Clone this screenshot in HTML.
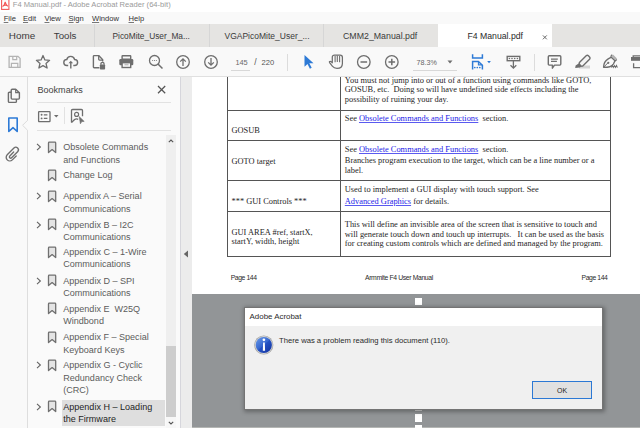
<!DOCTYPE html>
<html><head><meta charset="utf-8"><style>
html,body{margin:0;padding:0;width:640px;height:428px;overflow:hidden;background:#fff;}
.r{position:absolute;display:block;}
.t{position:absolute;white-space:nowrap;}
u.lk{color:#2323e8;text-decoration:underline;text-decoration-thickness:0.6px;text-underline-offset:1px;text-decoration-color:#5a5af0;}
u.m{text-decoration:underline;text-decoration-thickness:0.6px;text-underline-offset:0.8px;text-decoration-color:#777;}
svg.r{overflow:visible;}
</style></head><body>
<div class="r" style="left:0px;top:0px;width:640px;height:12px;background:#ffffff;"></div>
<div class="r" style="left:0px;top:12px;width:640px;height:12px;background:#f9f9f9;"></div>
<div class="r" style="left:0px;top:24px;width:640px;height:23px;background:#e5e4e2;"></div>
<div class="r" style="left:438px;top:24px;width:114px;height:23px;background:#ffffff;"></div>
<div class="r" style="left:94px;top:24px;width:1px;height:23px;background:#d6d6d6;"></div>
<div class="r" style="left:209px;top:24px;width:1px;height:23px;background:#d6d6d6;"></div>
<div class="r" style="left:323px;top:24px;width:1px;height:23px;background:#d6d6d6;"></div>
<div class="r" style="left:0px;top:47px;width:640px;height:29px;background:#f9f9f9;"></div>
<div class="r" style="left:0px;top:76px;width:640px;height:1px;background:#e0e0e0;"></div>
<div class="r" style="left:0px;top:77px;width:27px;height:351px;background:#f9f9f9;"></div>
<div class="r" style="left:27px;top:77px;width:1px;height:351px;background:#dedede;"></div>
<div class="r" style="left:28px;top:77px;width:152px;height:351px;background:#fafafa;"></div>
<div class="r" style="left:180px;top:77px;width:12px;height:351px;background:#ececec;"></div>
<div class="r" style="left:180px;top:77px;width:1px;height:351px;background:#d6d6dc;"></div>
<div class="r" style="left:192px;top:77px;width:448px;height:217px;background:#ffffff;"></div>
<div class="r" style="left:192px;top:294px;width:448px;height:134px;background:#929597;"></div>
<svg class="r" style="left:1px;top:0px;" width="9" height="11" viewBox="0 0 9 11"><rect x="0.6" y="-0.5" width="7.3" height="9.9" fill="#fff" stroke="#f25a5a" stroke-width="1.1"/><path d="M4.2 1.8c-0.5 2.2-1.5 4-2.6 5M4.2 1.8c0.5 2.2 1.5 3.8 2.7 4.6M1.8 5.8c1.6-0.8 3.4-0.8 5 0" fill="none" stroke="#f25a5a" stroke-width="1.1"/></svg>
<div class="t" style="left:12.8px;top:0.72px;font-size:7.6px;line-height:8.489px;color:#9a9a9a;font-family:'Liberation Sans', sans-serif;">F4 Manual.pdf - Adobe Acrobat Reader (64-bit)</div>
<div class="t" style="left:3.7px;top:14.72px;font-size:7.6px;line-height:8.489px;color:#333;font-family:'Liberation Sans', sans-serif;"><u class="m">F</u>ile</div>
<div class="t" style="left:23px;top:14.72px;font-size:7.6px;line-height:8.489px;color:#333;font-family:'Liberation Sans', sans-serif;"><u class="m">E</u>dit</div>
<div class="t" style="left:44.5px;top:14.72px;font-size:7.6px;line-height:8.489px;color:#333;font-family:'Liberation Sans', sans-serif;"><u class="m">V</u>iew</div>
<div class="t" style="left:68.5px;top:14.72px;font-size:7.6px;line-height:8.489px;color:#333;font-family:'Liberation Sans', sans-serif;"><u class="m">S</u>ign</div>
<div class="t" style="left:92px;top:14.72px;font-size:7.6px;line-height:8.489px;color:#333;font-family:'Liberation Sans', sans-serif;"><u class="m">W</u>indow</div>
<div class="t" style="left:128.5px;top:14.72px;font-size:7.6px;line-height:8.489px;color:#333;font-family:'Liberation Sans', sans-serif;"><u class="m">H</u>elp</div>
<div class="t" style="left:8.8px;top:30.24px;font-size:9.9px;line-height:11.058px;color:#3a3a3a;font-family:'Liberation Sans', sans-serif;">Home</div>
<div class="t" style="left:53.8px;top:30.92px;font-size:9.7px;line-height:10.835px;color:#3a3a3a;font-family:'Liberation Sans', sans-serif;">Tools</div>
<div class="t" style="left:112.5px;top:32.44px;font-size:8.35px;line-height:9.327px;color:#3a3a3a;font-family:'Liberation Sans', sans-serif;">PicoMite_User_Ma...</div>
<div class="t" style="left:224.5px;top:32.31px;font-size:8.5px;line-height:9.495px;color:#3a3a3a;font-family:'Liberation Sans', sans-serif;">VGAPicoMite_User_...</div>
<div class="t" style="left:343px;top:32.04px;font-size:8.8px;line-height:9.830px;color:#3a3a3a;font-family:'Liberation Sans', sans-serif;">CMM2_Manual.pdf</div>
<div class="t" style="left:467.5px;top:32.43px;font-size:8.7px;line-height:9.718px;color:#2a2a2a;font-family:'Liberation Sans', sans-serif;">F4 Manual.pdf</div>
<svg class="r" style="left:541px;top:33px;" width="8" height="8" viewBox="0 0 8 8"><path d="M1.9 2.4l3.9 3.9M5.8 2.4l-3.9 3.9" stroke="#6a6a6a" stroke-width="1"/></svg>
<svg class="r" style="left:7px;top:55px;" width="16" height="15" viewBox="0 0 16 15"><path d="M2.1 1.3H11L13.1 3.4V12.4H2.1Z" stroke="#b4b4b4" stroke-width="1.3" fill="none"/><path d="M5.8 1.3V4.7H9.7V1.3M4.4 12.4V8.3H10.8V12.4" stroke="#b4b4b4" stroke-width="1.2" fill="none"/></svg>
<svg class="r" style="left:35px;top:54px;" width="16" height="16" viewBox="0 0 16 16"><path d="M8 1.5l1.9 4.4 4.7.4-3.6 3.1 1.1 4.6L8 11.6l-4.1 2.4 1.1-4.6-3.6-3.1 4.7-.4z" stroke="#6e6e6e" stroke-width="1.3" fill="none" stroke-linejoin="round"/></svg>
<svg class="r" style="left:60px;top:52px;" width="22" height="20" viewBox="0 0 22 20"><path d="M8.2 13.5H6.8A3 3 0 0 1 6.8 7.5A4 4 0 0 1 14.6 7.5A3 3 0 0 1 14.6 13.5H13.3" stroke="#6e6e6e" stroke-width="1.4" fill="none"/><path d="M10.8 16.6V10.6" stroke="#6e6e6e" stroke-width="1.4"/><path d="M8.5 11.3L10.8 8.7L13.1 11.3Z" fill="#6e6e6e"/></svg>
<svg class="r" style="left:88px;top:52px;" width="22" height="20" viewBox="0 0 22 20"><path d="M11.4 15.7H6.1Q5.4 15.7 5.4 15V4.3Q5.4 3.6 6.1 3.6H10.7L14.7 7.8V9.6" stroke="#6e6e6e" stroke-width="1.4" fill="none" stroke-linejoin="round"/><path d="M10.7 3.8V7.3Q10.7 8.1 11.5 8.1H14.5" stroke="#6e6e6e" stroke-width="1.3" fill="none"/><rect x="11.9" y="12.5" width="5.2" height="5" rx="0.8" fill="#6e6e6e"/><path d="M12.9 12.8V11.9A1.6 1.6 0 0 1 16.1 11.9V12.8" stroke="#6e6e6e" stroke-width="1.3" fill="none"/></svg>
<svg class="r" style="left:118px;top:54px;" width="17" height="15" viewBox="0 0 17 15"><rect x="4.1" y="1.8" width="8.6" height="3.4" rx="0.5" stroke="#6e6e6e" stroke-width="1.4" fill="none"/><rect x="1.3" y="5" width="14" height="6.3" rx="1.3" fill="#6e6e6e"/><rect x="4.1" y="8.7" width="8.6" height="4.8" fill="#f9f9f9" stroke="#6e6e6e" stroke-width="1.4"/><path d="M6.5 10.8h4" stroke="#aaa" stroke-width="1"/></svg>
<svg class="r" style="left:148px;top:54px;" width="16" height="16" viewBox="0 0 16 16"><circle cx="6.5" cy="6.5" r="5" stroke="#6e6e6e" stroke-width="1.3" fill="none"/><path d="M10 10l4.5 4.5" stroke="#6e6e6e" stroke-width="1.5"/><path d="M4.3 6.5h0.8M6.1 6.5h0.8M7.9 6.5h0.8" stroke="#6e6e6e" stroke-width="1.2"/></svg>
<svg class="r" style="left:175px;top:55px;" width="16" height="15" viewBox="0 0 16 15"><circle cx="8" cy="7" r="6.3" stroke="#6e6e6e" stroke-width="1.3" fill="none"/><path d="M8 11v-7M5.2 6.6L8 3.8l2.8 2.8" stroke="#6e6e6e" stroke-width="1.3" fill="none"/></svg>
<svg class="r" style="left:203px;top:55px;" width="16" height="15" viewBox="0 0 16 15"><circle cx="8" cy="7" r="6.3" stroke="#6e6e6e" stroke-width="1.3" fill="none"/><path d="M8 3v7M5.2 7.4L8 10.2l2.8-2.8" stroke="#6e6e6e" stroke-width="1.3" fill="none"/></svg>
<div class="t" style="left:235.4px;top:58.60px;font-size:7.4px;line-height:8.266px;color:#6a6a6a;font-family:'Liberation Sans', sans-serif;">145</div>
<div class="r" style="left:231px;top:70px;width:19px;height:1px;background:#d8d8d8;"></div>
<div class="t" style="left:254.2px;top:58.02px;font-size:8.6px;line-height:9.606px;color:#555;font-family:'Liberation Sans', sans-serif;">/</div>
<div class="t" style="left:261.6px;top:58.92px;font-size:7.6px;line-height:8.489px;color:#555;font-family:'Liberation Sans', sans-serif;">220</div>
<div class="r" style="left:287px;top:53.5px;width:1px;height:17px;background:#dcdcdc;"></div>
<svg class="r" style="left:303px;top:54px;" width="11" height="15" viewBox="0 0 11 15"><path d="M1.5 1l9 8.2h-4.2l2.4 4.6-1.8.9-2.4-4.6-3 2.6z" fill="#2d7ad6"/></svg>
<svg class="r" style="left:326px;top:52px;" width="20" height="20" viewBox="0 0 20 20"><path d="M6.3 10.8V5Q6.3 3.2 8.5 3.2H14.2Q16.4 3.2 16.4 5.4V11.5Q16.4 16.4 11 16.4Q8 16.4 6.3 14.2L3.6 10.6Q3 9.3 4.3 9.3Q5.3 9.3 6.3 10.8Z" stroke="#6e6e6e" stroke-width="1.25" fill="none" stroke-linejoin="round"/><path d="M9.1 4v6.2M11.3 3.6v6.4M13.6 4v6.2" stroke="#6e6e6e" stroke-width="1.1"/></svg>
<svg class="r" style="left:356px;top:55px;" width="16" height="15" viewBox="0 0 16 15"><circle cx="7.8" cy="7" r="6.3" stroke="#6e6e6e" stroke-width="1.3" fill="none"/><path d="M4.5 7h6.6" stroke="#6e6e6e" stroke-width="1.5"/></svg>
<svg class="r" style="left:384px;top:55px;" width="16" height="15" viewBox="0 0 16 15"><circle cx="7.8" cy="7" r="6.3" stroke="#6e6e6e" stroke-width="1.3" fill="none"/><path d="M4.5 7h6.6M7.8 3.7v6.6" stroke="#6e6e6e" stroke-width="1.5"/></svg>
<div class="t" style="left:416.6px;top:58.78px;font-size:7.2px;line-height:8.042px;color:#666;font-family:'Liberation Sans', sans-serif;">78.3%</div>
<div class="r" style="left:413px;top:70px;width:44px;height:1px;background:#d8d8d8;"></div>
<svg class="r" style="left:447px;top:60px;" width="6" height="4" viewBox="0 0 6 4"><path d="M0.5 0.5h5l-2.5 3z" fill="#6e6e6e"/></svg>
<svg class="r" style="left:466px;top:52px;" width="30" height="20" viewBox="0 0 30 20"><path d="M6.6 2.3V6.1H16.4V2.3" stroke="#2d7ad6" stroke-width="1.5" fill="none"/><path d="M6.6 17.6V9.4H12.4L16.4 13.2V17.6" stroke="#2d7ad6" stroke-width="1.5" fill="none"/><path d="M12.4 9.4V12.9H16.2" stroke="#2d7ad6" stroke-width="1.1" fill="none"/><circle cx="8.8" cy="15.5" r="0.85" fill="#2d7ad6"/><circle cx="11.3" cy="15.5" r="0.85" fill="#2d7ad6"/><circle cx="13.8" cy="15.5" r="0.85" fill="#2d7ad6"/></svg>
<svg class="r" style="left:466px;top:52px;" width="30" height="20" viewBox="0 0 30 20"><path d="M21.2 9h3.7l-1.85 2.3z" fill="#2d7ad6"/></svg>
<svg class="r" style="left:500px;top:52px;" width="30" height="20" viewBox="0 0 30 20"><rect x="7.2" y="4.4" width="12.6" height="4.3" stroke="#6e6e6e" stroke-width="1.4" fill="none"/><circle cx="9.4" cy="6.5" r="0.8" fill="#6e6e6e"/><circle cx="12" cy="6.5" r="0.8" fill="#6e6e6e"/><circle cx="14.7" cy="6.5" r="0.8" fill="#6e6e6e"/><circle cx="17.4" cy="6.5" r="0.8" fill="#6e6e6e"/><path d="M13.4 8.7V15.8M10.5 13.2l2.9 2.9 2.9-2.9" stroke="#6e6e6e" stroke-width="1.3" fill="none"/></svg>
<div class="r" style="left:534px;top:53.5px;width:1px;height:17px;background:#dcdcdc;"></div>
<svg class="r" style="left:544px;top:52px;" width="22" height="20" viewBox="0 0 22 20"><path d="M5.3 3.7H15.8Q16.8 3.7 16.8 4.7V12.1Q16.8 13.1 15.8 13.1H10.5L8.4 16.2V13.1H5.3Q4.3 13.1 4.3 12.1V4.7Q4.3 3.7 5.3 3.7Z" stroke="#6e6e6e" stroke-width="1.4" fill="none" stroke-linejoin="round"/><path d="M7 7.2H13.8M7 9.3H12.9" stroke="#6e6e6e" stroke-width="1.2"/></svg>
<svg class="r" style="left:572px;top:52px;" width="24" height="20" viewBox="0 0 24 20"><rect x="7" y="13.5" width="11" height="3" fill="#d4d4d4"/><g transform="translate(12.6,8.8) rotate(-45)"><rect x="-6.2" y="-2.4" width="12.4" height="4.8" rx="1.6" stroke="#6e6e6e" stroke-width="1.4" fill="#f4f4f4"/></g><path d="M6.6 11.6l2.8 2.8-1.6 1.2-4.6 0.4 0.4-2.6z" fill="#6e6e6e"/></svg>
<svg class="r" style="left:600px;top:52px;" width="24" height="20" viewBox="0 0 24 20"><path d="M3.6 15.2c0-3.8 1.6-6.6 4.6-8.4l3.2-1.6 3.6 3.6-1.6 3.2c-1.8 3-4.8 3.2-9.8 3.2z" stroke="#6e6e6e" stroke-width="1.4" fill="none" stroke-linejoin="round"/><path d="M3.8 15l4.2-4.2" stroke="#6e6e6e" stroke-width="1"/><circle cx="8.3" cy="10.8" r="1.1" fill="#6e6e6e"/><path d="M10.6 4.6l1.6-1.8M15 9l1.8-1.6" stroke="#6e6e6e" stroke-width="1.3"/><path d="M12.2 3.2l4 4" stroke="#b0b0b0" stroke-width="2"/><path d="M11.2 15.6l1.1-2.1 1 1.9 1.1-1.9 1 1.9 1.1-1.9 0.9 2.1" stroke="#6e6e6e" stroke-width="1.05" fill="none"/></svg>
<svg class="r" style="left:620px;top:50px;" width="20" height="24" viewBox="0 0 20 24"><rect x="11" y="7" width="10" height="3.8" fill="#6e6e6e"/><path d="M13.2 7v-1.2h8" stroke="#6e6e6e" stroke-width="1.3" fill="none"/><path d="M13.6 13.2v4.4h7" stroke="#6e6e6e" stroke-width="1.3" fill="none"/></svg>
<svg class="r" style="left:4px;top:86px;" width="20" height="20" viewBox="0 0 20 20"><path d="M8.2 3.3H11.7L15.4 6.8V12.1Q15.4 13.1 14.4 13.1H8.2Q7.2 13.1 7.2 12.1V4.3Q7.2 3.3 8.2 3.3Z" stroke="#6e6e6e" stroke-width="1.4" fill="none" stroke-linejoin="round"/><path d="M11.7 3.3V6.6H15.4" stroke="#6e6e6e" stroke-width="1.2" fill="none"/><path d="M7.2 6.3H5.4Q4.4 6.3 4.4 7.3V15.4Q4.4 16.4 5.4 16.4H11.4Q12.4 16.4 12.4 15.4V13.1" stroke="#6e6e6e" stroke-width="1.4" fill="none"/></svg>
<svg class="r" style="left:7px;top:117px;" width="12" height="16" viewBox="0 0 12 16"><path d="M1.8 1v13.5l4.2-3.8 4.2 3.8V1z" stroke="#2d7ad6" stroke-width="1.6" fill="none" stroke-linejoin="round"/></svg>
<svg class="r" style="left:22px;top:120px;" width="7" height="11" viewBox="0 0 7 11"><path d="M5.5 0.4L0.6 5.3 5.5 10.2H6.2V0.4Z" fill="#fafafa"/><path d="M5.5 0.4L0.6 5.3 5.5 10.2" stroke="#dcdcdc" stroke-width="1" fill="none"/></svg>
<svg class="r" style="left:2px;top:144px;" width="22" height="22" viewBox="0 0 22 22"><g transform="translate(10.6,10.5) rotate(45)"><path d="M-1 -2.5V3A1.3 1.3 0 0 0 1.6 3V-5.5A2.6 2.6 0 0 0 -3.6 -5.5V4A3.6 3.6 0 0 0 3.6 4V-1.5" stroke="#6e6e6e" stroke-width="1.35" fill="none" stroke-linecap="round"/></g></svg>
<div class="t" style="left:37.5px;top:85.01px;font-size:9.05px;line-height:10.109px;color:#444;font-family:'Liberation Sans', sans-serif;">Bookmarks</div>
<svg class="r" style="left:157px;top:85px;" width="10" height="10" viewBox="0 0 10 10"><path d="M1 1l7.2 7.2M8.2 1l-7.2 7.2" stroke="#555" stroke-width="1.25"/></svg>
<div class="r" style="left:37px;top:102px;width:134px;height:1px;background:#e2e2e2;"></div>
<svg class="r" style="left:37px;top:110px;" width="15" height="13" viewBox="0 0 15 13"><rect x="1.6" y="1.6" width="11.4" height="10" rx="0.6" stroke="#6e6e6e" stroke-width="1.3" fill="none"/><circle cx="4.6" cy="4.8" r="0.95" fill="#6e6e6e"/><circle cx="4.6" cy="8.4" r="0.95" fill="#6e6e6e"/><path d="M6.8 4.8h3.6M6.8 8.4h3.6" stroke="#6e6e6e" stroke-width="1.3"/></svg>
<svg class="r" style="left:54px;top:115px;" width="5" height="3" viewBox="0 0 5 3"><path d="M0 0h4.5l-2.25 2.5z" fill="#6e6e6e"/></svg>
<div class="r" style="left:64px;top:107px;width:1px;height:17px;background:#e2e2e2;"></div>
<svg class="r" style="left:70px;top:108px;" width="16" height="16" viewBox="0 0 16 16"><path d="M1.5 14.5V2.6Q1.5 1.5 2.6 1.5H11.4Q12.5 1.5 12.5 2.6V8.2" stroke="#6e6e6e" stroke-width="1.3" fill="none"/><path d="M1.5 14.5L4.6 11.6Q6.4 10.2 8.2 11.4" stroke="#6e6e6e" stroke-width="1.3" fill="none"/><circle cx="6.6" cy="6.4" r="2" stroke="#6e6e6e" stroke-width="1.2" fill="none"/><path d="M9.2 8.6L14.2 13.4 11.8 13.6 10.4 15.8Z" fill="#6e6e6e" stroke="#6e6e6e" stroke-width="0.6" stroke-linejoin="round"/></svg>
<div class="r" style="left:37px;top:130px;width:134px;height:1px;background:#e2e2e2;"></div>
<div class="r" style="left:166px;top:135px;width:10px;height:282px;background:#efefef;"></div>
<div class="r" style="left:166px;top:417px;width:10px;height:11px;background:#f7f7f7;"></div>
<div class="r" style="left:166px;top:345.5px;width:10px;height:71.5px;background:#cdcdcd;"></div>
<svg class="r" style="left:168px;top:138px;" width="6" height="6" viewBox="0 0 6 6"><path d="M0.8 4.2L3 2 5.2 4.2" stroke="#555" stroke-width="1.1" fill="none"/></svg>
<svg class="r" style="left:168px;top:420px;" width="6" height="6" viewBox="0 0 6 6"><path d="M0.8 1.8L3 4 5.2 1.8" stroke="#555" stroke-width="1.1" fill="none"/></svg>
<svg class="r" style="left:183px;top:250px;" width="6" height="8" viewBox="0 0 6 8"><path d="M5 0.5v7L0.8 4z" fill="#666"/></svg>
<svg class="r" style="left:36px;top:143.3px;" width="6" height="8" viewBox="0 0 6 8"><path d="M1 0.9L4.4 4 1 7.1" stroke="#606060" stroke-width="1.05" fill="none"/></svg>
<svg class="r" style="left:47px;top:140.8px;" width="10" height="13" viewBox="0 0 10 13"><path d="M1.5 1.9Q1.5 1.1 2.3 1.1H7.9Q8.7 1.1 8.7 1.9V11.6L5.1 8.6L1.5 11.6Z" fill="#e4e4e4" stroke="#707070" stroke-width="1.3" stroke-linejoin="round"/></svg>
<div class="t" style="left:63.2px;top:142.11px;font-size:9.05px;line-height:10.109px;color:#5c5c5c;font-family:'Liberation Sans', sans-serif;">Obsolete Commands</div>
<div class="t" style="left:63.2px;top:154.71px;font-size:9.05px;line-height:10.109px;color:#5c5c5c;font-family:'Liberation Sans', sans-serif;">and Functions</div>
<svg class="r" style="left:47px;top:168.8px;" width="10" height="13" viewBox="0 0 10 13"><path d="M1.5 1.9Q1.5 1.1 2.3 1.1H7.9Q8.7 1.1 8.7 1.9V11.6L5.1 8.6L1.5 11.6Z" fill="#e4e4e4" stroke="#707070" stroke-width="1.3" stroke-linejoin="round"/></svg>
<div class="t" style="left:63.2px;top:170.11px;font-size:9.05px;line-height:10.109px;color:#5c5c5c;font-family:'Liberation Sans', sans-serif;">Change Log</div>
<svg class="r" style="left:36px;top:192.1px;" width="6" height="8" viewBox="0 0 6 8"><path d="M1 0.9L4.4 4 1 7.1" stroke="#606060" stroke-width="1.05" fill="none"/></svg>
<svg class="r" style="left:47px;top:189.6px;" width="10" height="13" viewBox="0 0 10 13"><path d="M1.5 1.9Q1.5 1.1 2.3 1.1H7.9Q8.7 1.1 8.7 1.9V11.6L5.1 8.6L1.5 11.6Z" fill="#e4e4e4" stroke="#707070" stroke-width="1.3" stroke-linejoin="round"/></svg>
<div class="t" style="left:63.2px;top:190.91px;font-size:9.05px;line-height:10.109px;color:#5c5c5c;font-family:'Liberation Sans', sans-serif;">Appendix A – Serial</div>
<div class="t" style="left:63.2px;top:203.51px;font-size:9.05px;line-height:10.109px;color:#5c5c5c;font-family:'Liberation Sans', sans-serif;">Communications</div>
<svg class="r" style="left:36px;top:220.9px;" width="6" height="8" viewBox="0 0 6 8"><path d="M1 0.9L4.4 4 1 7.1" stroke="#606060" stroke-width="1.05" fill="none"/></svg>
<svg class="r" style="left:47px;top:218.4px;" width="10" height="13" viewBox="0 0 10 13"><path d="M1.5 1.9Q1.5 1.1 2.3 1.1H7.9Q8.7 1.1 8.7 1.9V11.6L5.1 8.6L1.5 11.6Z" fill="#e4e4e4" stroke="#707070" stroke-width="1.3" stroke-linejoin="round"/></svg>
<div class="t" style="left:63.2px;top:219.71px;font-size:9.05px;line-height:10.109px;color:#5c5c5c;font-family:'Liberation Sans', sans-serif;">Appendix B – I2C</div>
<div class="t" style="left:63.2px;top:232.31px;font-size:9.05px;line-height:10.109px;color:#5c5c5c;font-family:'Liberation Sans', sans-serif;">Communications</div>
<svg class="r" style="left:47px;top:245.5px;" width="10" height="13" viewBox="0 0 10 13"><path d="M1.5 1.9Q1.5 1.1 2.3 1.1H7.9Q8.7 1.1 8.7 1.9V11.6L5.1 8.6L1.5 11.6Z" fill="#e4e4e4" stroke="#707070" stroke-width="1.3" stroke-linejoin="round"/></svg>
<div class="t" style="left:63.2px;top:246.81px;font-size:9.05px;line-height:10.109px;color:#5c5c5c;font-family:'Liberation Sans', sans-serif;">Appendix C – 1-Wire</div>
<div class="t" style="left:63.2px;top:259.41px;font-size:9.05px;line-height:10.109px;color:#5c5c5c;font-family:'Liberation Sans', sans-serif;">Communications</div>
<svg class="r" style="left:36px;top:276.9px;" width="6" height="8" viewBox="0 0 6 8"><path d="M1 0.9L4.4 4 1 7.1" stroke="#606060" stroke-width="1.05" fill="none"/></svg>
<svg class="r" style="left:47px;top:274.4px;" width="10" height="13" viewBox="0 0 10 13"><path d="M1.5 1.9Q1.5 1.1 2.3 1.1H7.9Q8.7 1.1 8.7 1.9V11.6L5.1 8.6L1.5 11.6Z" fill="#e4e4e4" stroke="#707070" stroke-width="1.3" stroke-linejoin="round"/></svg>
<div class="t" style="left:63.2px;top:275.71px;font-size:9.05px;line-height:10.109px;color:#5c5c5c;font-family:'Liberation Sans', sans-serif;">Appendix D – SPI</div>
<div class="t" style="left:63.2px;top:288.31px;font-size:9.05px;line-height:10.109px;color:#5c5c5c;font-family:'Liberation Sans', sans-serif;">Communications</div>
<svg class="r" style="left:47px;top:302.2px;" width="10" height="13" viewBox="0 0 10 13"><path d="M1.5 1.9Q1.5 1.1 2.3 1.1H7.9Q8.7 1.1 8.7 1.9V11.6L5.1 8.6L1.5 11.6Z" fill="#e4e4e4" stroke="#707070" stroke-width="1.3" stroke-linejoin="round"/></svg>
<div class="t" style="left:63.2px;top:303.51px;font-size:9.05px;line-height:10.109px;color:#5c5c5c;font-family:'Liberation Sans', sans-serif;">Appendix E&nbsp; W25Q</div>
<div class="t" style="left:63.2px;top:316.11px;font-size:9.05px;line-height:10.109px;color:#5c5c5c;font-family:'Liberation Sans', sans-serif;">Windbond</div>
<svg class="r" style="left:47px;top:330.8px;" width="10" height="13" viewBox="0 0 10 13"><path d="M1.5 1.9Q1.5 1.1 2.3 1.1H7.9Q8.7 1.1 8.7 1.9V11.6L5.1 8.6L1.5 11.6Z" fill="#e4e4e4" stroke="#707070" stroke-width="1.3" stroke-linejoin="round"/></svg>
<div class="t" style="left:63.2px;top:332.11px;font-size:9.05px;line-height:10.109px;color:#5c5c5c;font-family:'Liberation Sans', sans-serif;">Appendix F – Special</div>
<div class="t" style="left:63.2px;top:344.71px;font-size:9.05px;line-height:10.109px;color:#5c5c5c;font-family:'Liberation Sans', sans-serif;">Keyboard Keys</div>
<svg class="r" style="left:36px;top:361.4px;" width="6" height="8" viewBox="0 0 6 8"><path d="M1 0.9L4.4 4 1 7.1" stroke="#606060" stroke-width="1.05" fill="none"/></svg>
<svg class="r" style="left:47px;top:358.9px;" width="10" height="13" viewBox="0 0 10 13"><path d="M1.5 1.9Q1.5 1.1 2.3 1.1H7.9Q8.7 1.1 8.7 1.9V11.6L5.1 8.6L1.5 11.6Z" fill="#e4e4e4" stroke="#707070" stroke-width="1.3" stroke-linejoin="round"/></svg>
<div class="t" style="left:63.2px;top:360.21px;font-size:9.05px;line-height:10.109px;color:#5c5c5c;font-family:'Liberation Sans', sans-serif;">Appendix G - Cyclic</div>
<div class="t" style="left:63.2px;top:372.81px;font-size:9.05px;line-height:10.109px;color:#5c5c5c;font-family:'Liberation Sans', sans-serif;">Redundancy Check</div>
<div class="t" style="left:63.2px;top:385.41px;font-size:9.05px;line-height:10.109px;color:#5c5c5c;font-family:'Liberation Sans', sans-serif;">(CRC)</div>
<div class="r" style="left:62px;top:399.7px;width:103px;height:26px;background:#dedede;"></div>
<svg class="r" style="left:36px;top:402.9px;" width="6" height="8" viewBox="0 0 6 8"><path d="M1 0.9L4.4 4 1 7.1" stroke="#606060" stroke-width="1.05" fill="none"/></svg>
<svg class="r" style="left:47px;top:400.4px;" width="10" height="13" viewBox="0 0 10 13"><path d="M1.5 1.9Q1.5 1.1 2.3 1.1H7.9Q8.7 1.1 8.7 1.9V11.6L5.1 8.6L1.5 11.6Z" fill="#e4e4e4" stroke="#707070" stroke-width="1.3" stroke-linejoin="round"/></svg>
<div class="t" style="left:63.2px;top:401.71px;font-size:9.05px;line-height:10.109px;color:#1e1e1e;font-family:'Liberation Sans', sans-serif;">Appendix H – Loading</div>
<div class="t" style="left:63.2px;top:414.31px;font-size:9.05px;line-height:10.109px;color:#1e1e1e;font-family:'Liberation Sans', sans-serif;">the Firmware</div>
<div class="r" style="left:227px;top:77px;width:1px;height:179px;background:#555;"></div>
<div class="r" style="left:340px;top:77px;width:1px;height:179px;background:#555;"></div>
<div class="r" style="left:610px;top:77px;width:1px;height:179px;background:#555;"></div>
<div class="r" style="left:227px;top:109.5px;width:384px;height:1px;background:#555;"></div>
<div class="r" style="left:227px;top:139.5px;width:384px;height:1px;background:#555;"></div>
<div class="r" style="left:227px;top:179.9px;width:384px;height:1px;background:#555;"></div>
<div class="r" style="left:227px;top:210.5px;width:384px;height:1px;background:#555;"></div>
<div class="r" style="left:227px;top:255.5px;width:384px;height:1px;background:#555;"></div>
<div class="t" style="left:344.8px;top:75.52px;font-size:8.4px;line-height:9.299px;color:#262626;font-family:'Liberation Serif', serif;">You must not jump into or out of a function using commands like GOTO,</div>
<div class="t" style="left:344.8px;top:85.32px;font-size:8.4px;line-height:9.299px;color:#262626;font-family:'Liberation Serif', serif;">GOSUB, etc.&nbsp; Doing so will have undefined side effects including the</div>
<div class="t" style="left:344.8px;top:95.12px;font-size:8.4px;line-height:9.299px;color:#262626;font-family:'Liberation Serif', serif;">possibility of ruining your day.</div>
<div class="t" style="left:231.5px;top:125.92px;font-size:8.4px;line-height:9.299px;color:#262626;font-family:'Liberation Serif', serif;">GOSUB</div>
<div class="t" style="left:344.8px;top:114.42px;font-size:8.4px;line-height:9.299px;color:#262626;font-family:'Liberation Serif', serif;">See <u class="lk">Obsolete Commands and Functions</u>&nbsp; section.</div>
<div class="t" style="left:231.5px;top:156.92px;font-size:8.4px;line-height:9.299px;color:#262626;font-family:'Liberation Serif', serif;">GOTO target</div>
<div class="t" style="left:344.8px;top:144.92px;font-size:8.4px;line-height:9.299px;color:#262626;font-family:'Liberation Serif', serif;">See <u class="lk">Obsolete Commands and Functions</u>&nbsp; section.</div>
<div class="t" style="left:344.8px;top:155.72px;font-size:8.4px;line-height:9.299px;color:#262626;font-family:'Liberation Serif', serif;">Branches program execution to the target, which can be a line number or a</div>
<div class="t" style="left:344.8px;top:165.52px;font-size:8.4px;line-height:9.299px;color:#262626;font-family:'Liberation Serif', serif;">label.</div>
<div class="t" style="left:231.5px;top:197.02px;font-size:8.4px;line-height:9.299px;color:#262626;font-family:'Liberation Serif', serif;">*** GUI Controls ***</div>
<div class="t" style="left:344.8px;top:184.72px;font-size:8.4px;line-height:9.299px;color:#262626;font-family:'Liberation Serif', serif;">Used to implement a GUI display with touch support. See</div>
<div class="t" style="left:344.8px;top:196.52px;font-size:8.4px;line-height:9.299px;color:#262626;font-family:'Liberation Serif', serif;"><u class="lk">Advanced Graphics</u> for details.</div>
<div class="t" style="left:231.5px;top:227.52px;font-size:8.4px;line-height:9.299px;color:#262626;font-family:'Liberation Serif', serif;">GUI AREA #ref, startX,</div>
<div class="t" style="left:231.5px;top:237.12px;font-size:8.4px;line-height:9.299px;color:#262626;font-family:'Liberation Serif', serif;">startY, width, height</div>
<div class="t" style="left:344.8px;top:219.72px;font-size:8.4px;line-height:9.299px;color:#262626;font-family:'Liberation Serif', serif;">This will define an invisible area of the screen that is sensitive to touch and</div>
<div class="t" style="left:344.8px;top:229.52px;font-size:8.4px;line-height:9.299px;color:#262626;font-family:'Liberation Serif', serif;">will generate touch down and touch up interrupts.&nbsp;&nbsp; It can be used as the basis</div>
<div class="t" style="left:344.8px;top:239.12px;font-size:8.4px;line-height:9.299px;color:#262626;font-family:'Liberation Serif', serif;">for creating custom controls which are defined and managed by the program.</div>
<div class="t" style="left:230.7px;top:274.45px;font-size:6.8px;line-height:7.596px;color:#2a2a2a;font-family:'Liberation Sans', sans-serif;letter-spacing:-0.4px;">Page 144</div>
<div class="t" style="left:365px;top:274.45px;font-size:6.8px;line-height:7.596px;color:#2a2a2a;font-family:'Liberation Sans', sans-serif;letter-spacing:-0.35px;">Armmite F4 User Manual</div>
<div class="t" style="left:581.6px;top:274.45px;font-size:6.8px;line-height:7.596px;color:#2a2a2a;font-family:'Liberation Sans', sans-serif;letter-spacing:-0.4px;">Page 144</div>
<div class="r" style="left:192px;top:426.8px;width:448px;height:1.2px;background:#b4b6b4;"></div>
<div class="r" style="left:415px;top:297.7px;width:7.3px;height:7.3px;background:#ffffff;"></div>
<div class="r" style="left:415px;top:414px;width:7.3px;height:8px;background:#ffffff;"></div>
<div class="r" style="left:415px;top:425px;width:7.3px;height:3px;background:#ffffff;"></div>
<div class="r" style="left:415px;top:409.5px;width:7.3px;height:1.5px;background:#cfcfcf;"></div>
<div class="r" style="left:244px;top:306.6px;width:359px;height:103.2px;background:#f0f0f0;box-shadow:1px 1px 4px 1px rgba(0,0,0,0.30);box-sizing:border-box;border:1px solid #747474"></div>
<div class="r" style="left:245px;top:307.6px;width:357px;height:18.3px;background:#ffffff;"></div>
<div class="t" style="left:249.6px;top:312.85px;font-size:7.9px;line-height:8.824px;color:#2a2a2a;font-family:'Liberation Sans', sans-serif;">Adobe Acrobat</div>
<svg class="r" style="left:253px;top:334px;" width="22" height="22" viewBox="0 0 22 22"><defs><linearGradient id="ig" x1="0.15" y1="0.1" x2="0.85" y2="0.9"><stop offset="0" stop-color="#5f8fe2"/><stop offset="0.48" stop-color="#3566cf"/><stop offset="0.52" stop-color="#2553c4"/><stop offset="1" stop-color="#1638a6"/></linearGradient></defs><circle cx="10.8" cy="11" r="9.6" fill="#a4a4a4"/><circle cx="10.8" cy="11" r="8.9" fill="#d4d4d4"/><circle cx="10.8" cy="11" r="8.1" fill="url(#ig)"/><circle cx="10.9" cy="5.8" r="1.35" fill="#fff"/><path d="M10.1 8.4h1.7l0.3 8.3h-2.3z" fill="#fff"/></svg>
<div class="t" style="left:279px;top:337.27px;font-size:7.66px;line-height:8.556px;color:#2a2a2a;font-family:'Liberation Sans', sans-serif;">There was a problem reading this document (110).</div>
<div class="r" style="left:532px;top:381.2px;width:59.8px;height:17.6px;box-sizing:border-box;background:#e1e1e1;border:1.3px solid #2b78d4"></div>
<div class="t" style="left:557px;top:387.01px;font-size:6.95px;line-height:7.763px;color:#222;font-family:'Liberation Sans', sans-serif;">OK</div>
</body></html>
